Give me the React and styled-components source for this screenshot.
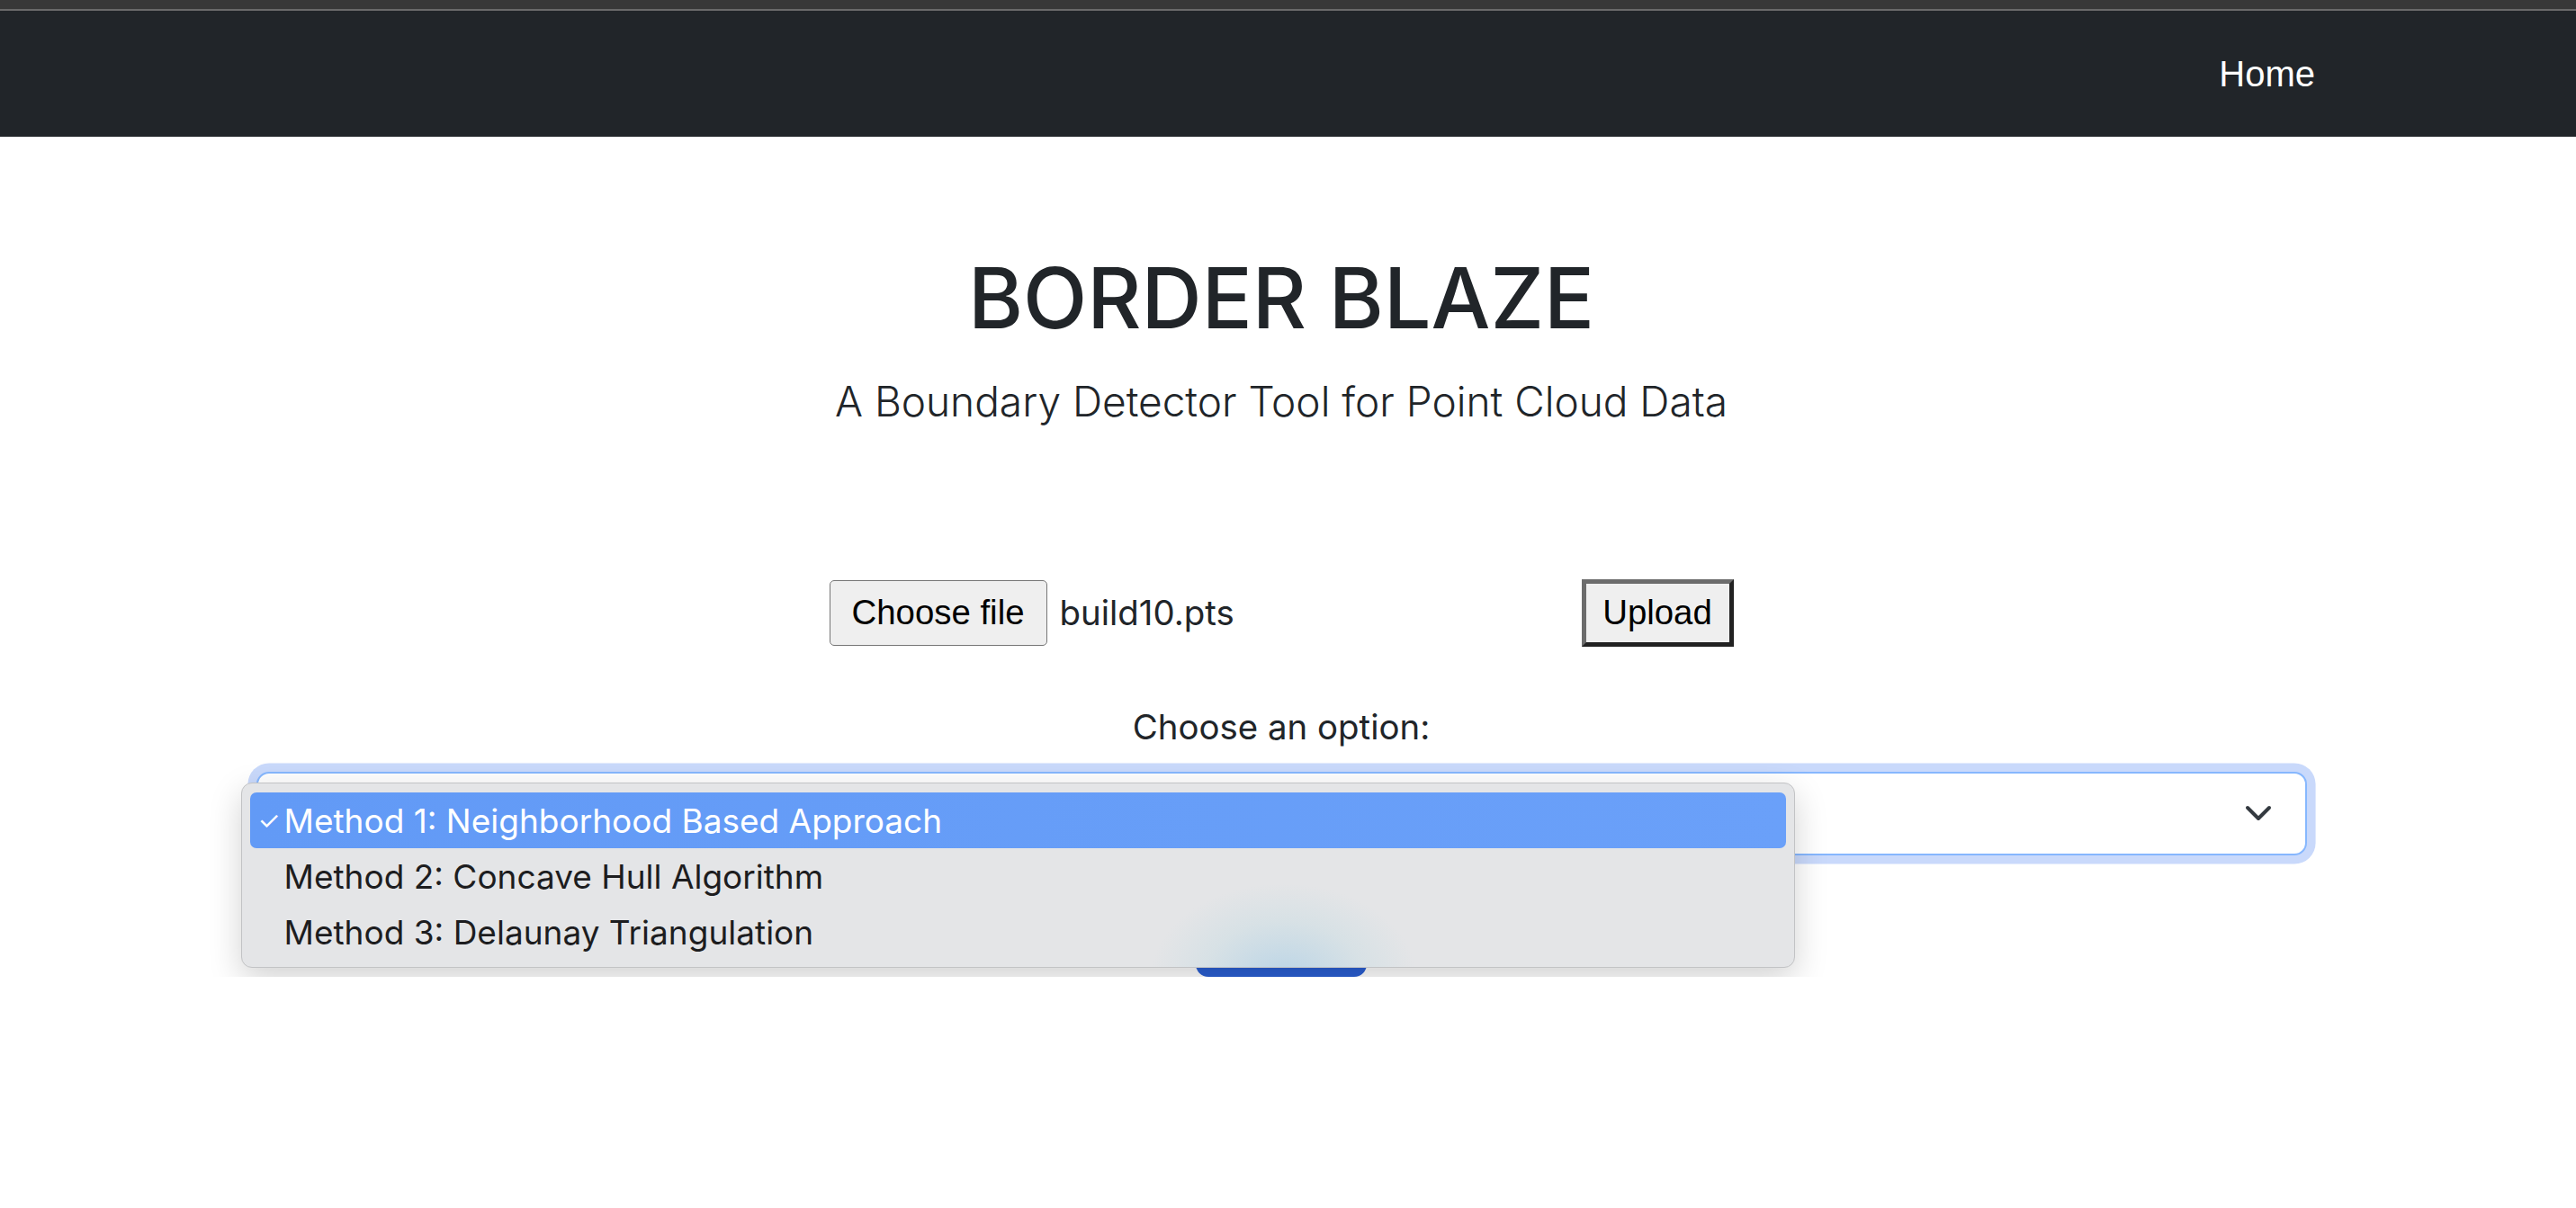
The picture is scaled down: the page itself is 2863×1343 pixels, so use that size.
import React from 'react'
import styled, { createGlobalStyle } from 'styled-components'

const GlobalStyle = createGlobalStyle`
    html, body {
        margin: 0;
        padding: 0;
        background: #fff;
    }
    body {
        font-family: Inter, "Noto Sans", sans-serif;
        color: #212529;
        overflow: hidden;
    }
`

const options = [
    'Method 1: Neighborhood Based Approach',
    'Method 2: Concave Hull Algorithm',
    'Method 3: Delaunay Triangulation',
]

function App() {
    return (
        <>
            <GlobalStyle />
            <Chrome />
            <Navbar>
                <NavLink href="#">Home</NavLink>
            </Navbar>
            <Main>
                <Title>BORDER BLAZE</Title>
                <Lead>A Boundary Detector Tool for Point Cloud Data</Lead>
                <UploadForm>
                    <FileInput>
                        <ChooseButton>Choose file</ChooseButton>
                        <FileName>build10.pts</FileName>
                    </FileInput>
                    <UploadButton>Upload</UploadButton>
                </UploadForm>
                <Label>Choose an option:</Label>
                <SelectWrap>
                    {/* the open list covers the chosen value, so only the arrow shows */}
                    <SelectBox>
                        <svg width="30" height="19" viewBox="0 0 30 19" fill="none">
                            <path d="M3 3l12 12 12-12" stroke="#343a40" strokeWidth="4" strokeLinecap="round" strokeLinejoin="round" />
                        </svg>
                    </SelectBox>
                    <Popup>
                        <Blob />
                        {options.map((opt, index) => (
                            <Option key={index} selected={index === 0}>
                                <Check>{index === 0 ? '✓' : ''}</Check>
                                {opt}
                            </Option>
                        ))}
                    </Popup>
                </SelectWrap>
                <SubmitButton>Submit</SubmitButton>
            </Main>
        </>
    )
}

export default App

const Chrome = styled.div`
    height: 10px;
    background: #383838;
    border-bottom: 2px solid #6a6a6a;
`
const Navbar = styled.nav`
    height: 140px;
    background: #212529;
    display: flex;
    align-items: center;
    justify-content: flex-end;
    padding-right: 290px;
`
const NavLink = styled.a`
    font-family: "Liberation Sans", Arial, sans-serif;
    font-size: 40px;
    color: #fff;
    text-decoration: none;
`
const Main = styled.main`
    padding-right: 15px;
    display: flex;
    flex-direction: column;
    align-items: center;
    text-align: center;
`
const Title = styled.h1`
    margin: 124px 0 0;
    font-size: 93px;
    font-weight: 500;
    line-height: 1.2;
`
const Lead = styled.p`
    margin: 24px 0 0;
    font-size: 46px;
    font-weight: 300;
    line-height: 1.5;
`
const UploadForm = styled.form`
    margin-top: 163px;
    display: flex;
    align-items: center;
    gap: 5px;
`
const FileInput = styled.div`
    width: 831px;
    display: flex;
    align-items: center;
    gap: 14px;
`
const ChooseButton = styled.button`
    height: 73px;
    width: 242px;
    padding: 0;
    font-family: "Liberation Sans", Arial, sans-serif;
    font-size: 38.4px;
    color: #000;
    background: #efefef;
    border: 1.5px solid #767676;
    border-radius: 5px;
`
const FileName = styled.span`
    font-size: 38.4px;
    color: #212529;
`
const UploadButton = styled.button`
    height: 75px;
    width: 169px;
    padding: 0;
    font-family: "Liberation Sans", Arial, sans-serif;
    font-size: 38.4px;
    color: #000;
    background: #efefef;
    border: 5px solid;
    border-color: #6c6c6c #222 #222 #6c6c6c;
`
const Label = styled.label`
    margin-top: 61px;
    font-size: 38.4px;
    line-height: 1.5;
`
const SelectWrap = styled.div`
    position: relative;
    margin-top: 21px;
    width: 2279px;
`
const SelectBox = styled.div`
    box-sizing: border-box;
    height: 93px;
    display: flex;
    align-items: center;
    justify-content: flex-end;
    padding: 0 37px 0 29px;
    border: 2.4px solid #86b7fe;
    border-radius: 14px;
    box-shadow: 0 0 0 9.6px #c9d9fb;
    background: #fff;
`
const Popup = styled.div`
    position: absolute;
    left: -17px;
    top: 12px;
    width: 1727px;
    height: 206px;
    box-sizing: border-box;
    padding: 10px 9px;
    background: #e4e5e7;
    border: 1.5px solid #c2c3c5;
    border-radius: 12px;
    box-shadow: 0 12px 36px rgba(0, 0, 0, 0.18);
    text-align: left;
    overflow: hidden;
`
const Blob = styled.div`
    position: absolute;
    left: 1010px;
    top: 60px;
    width: 295px;
    height: 190px;
    background: radial-gradient(ellipse 50% 55% at 50% 82%, rgba(185, 212, 230, 0.95), rgba(205, 222, 228, 0.55) 60%, rgba(228, 229, 231, 0) 100%);
`
const Option = styled.div`
    position: relative;
    height: 62px;
    display: flex;
    align-items: center;
    border-radius: 7px;
    font-size: 37px;
    color: ${(props) => (props.selected ? '#fff' : '#1d1d1f')};
    background: ${(props) => (props.selected ? 'linear-gradient(90deg, #629af6, #6aa0f9)' : 'transparent')};
`
const Check = styled.span`
    width: 29px;
    padding-left: 9px;
    font-size: 28px;
`
const SubmitButton = styled.button`
    margin-top: 44px;
    height: 91px;
    width: 190px;
    font-family: Inter, sans-serif;
    font-size: 38.4px;
    color: #fff;
    background: #2a5fd3;
    border: none;
    border-radius: 14px;
`
